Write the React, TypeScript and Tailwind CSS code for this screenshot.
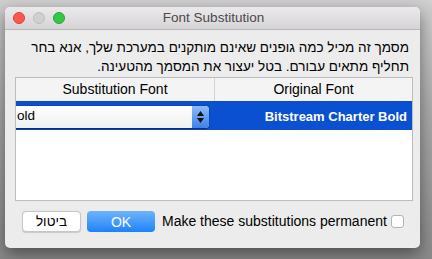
import React from "react";

export default function App() {
  return (
    <div
      className="w-[432px] h-[259px] overflow-hidden pt-[7px] pl-[5px]"
      style={{ background: "linear-gradient(180deg,#cfcfcf 0%,#a9a9a9 45%,#8a8a8a 100%)" }}
    >
      <div
        className="w-[415px] h-[241px] rounded-[5px] bg-[#ececec] flex flex-col overflow-hidden shadow-[0_6px_16px_rgba(0,0,0,0.45)]"
        style={{ fontFamily: '"Liberation Sans", Arial, sans-serif' }}
      >
        {/* title bar */}
        <div className="h-[23px] shrink-0 relative flex items-center justify-center bg-gradient-to-b from-[#ebe9eb] to-[#d6d4d6] border-b border-[#b8b8b8]">
          <div className="absolute left-[8px] top-[5px] flex gap-[8px]">
            <div className="w-[12px] h-[12px] rounded-full bg-[#fc5753] border border-[#df3e3a]" />
            <div className="w-[12px] h-[12px] rounded-full bg-[#d0d0d0] border border-[#bdbdbd]" />
            <div className="w-[12px] h-[12px] rounded-full bg-[#34c84a] border border-[#24a738]" />
          </div>
          <span className="text-[13.5px] text-[#4a4a4a] pl-[2px]">Font Substitution</span>
        </div>
        {/* message */}
        <div
          dir="rtl"
          className="pr-[11px] pl-[10px] pt-[8px] text-[13.5px] leading-[19px] text-black text-right"
        >
          <div>מסמך זה מכיל כמה גופנים שאינם מותקנים במערכת שלך, אנא בחר</div>
          <div>תחליף מתאים עבורם. בטל יעצור את המסמך מהטעינה.</div>
        </div>
        {/* table */}
        <div className="ml-[10px] mr-[7px] mt-[1px] h-[124px] shrink-0 border border-[#bcbcbc] bg-white flex flex-col">
          <div className="h-[23px] flex bg-[#f4f4f4] text-[14px] text-black">
            <div className="w-[199px] border-r border-[#d4d4d4] flex items-center justify-center">
              Substitution Font
            </div>
            <div className="flex-1 flex items-center justify-center">Original Font</div>
          </div>
          <div className="h-[29px] flex bg-[#0b50d0] border-t-[2px] border-[#0b4fcb]">
            <div className="w-[199px] overflow-hidden flex items-center">
              <div className="ml-[-10px] w-[203px] h-[22px] rounded-[4px] bg-gradient-to-b from-white to-[#f0f0f0] shadow-[0_0.5px_1.5px_rgba(0,0,0,0.5)] flex items-center">
                <span className="flex-1 pl-[11px] text-[13.5px] text-black">old</span>
                <div className="w-[17px] h-[22px] rounded-r-[4px] bg-gradient-to-b from-[#8cbcf7] to-[#3f7fe8] flex flex-col items-center justify-center gap-[2px]">
                  <svg width="7" height="5" viewBox="0 0 7 5"><path d="M3.5 0L7 5H0z" fill="#111" /></svg>
                  <svg width="7" height="5" viewBox="0 0 7 5"><path d="M0 0H7L3.5 5z" fill="#111" /></svg>
                </div>
              </div>
            </div>
            <div className="flex-1 flex items-center justify-end pr-[5px] text-[13px] font-bold text-white">
              Bitstream Charter Bold
            </div>
          </div>
          <div className="flex-1 bg-white" />
        </div>
        {/* buttons */}
        <div className="flex items-center mt-[10px] pl-[17px]">
          <button className="w-[59px] h-[21px] rounded-[4px] bg-white border border-[#c6c6c6] shadow-[0_0.5px_1px_rgba(0,0,0,0.15)] text-[13.5px] text-black leading-none">
            ביטול
          </button>
          <button className="ml-[6px] w-[68px] h-[21px] rounded-[4px] bg-gradient-to-b from-[#6cb3fa] to-[#1a82fb] text-[14px] text-white leading-none">
            OK
          </button>
          <span className="ml-[7px] text-[14px] text-black">Make these substitutions permanent</span>
          <div className="ml-[4px] w-[13px] h-[13px] rounded-[3px] bg-white border border-[#b4b4b4]" />
        </div>
      </div>
    </div>
  );
}
